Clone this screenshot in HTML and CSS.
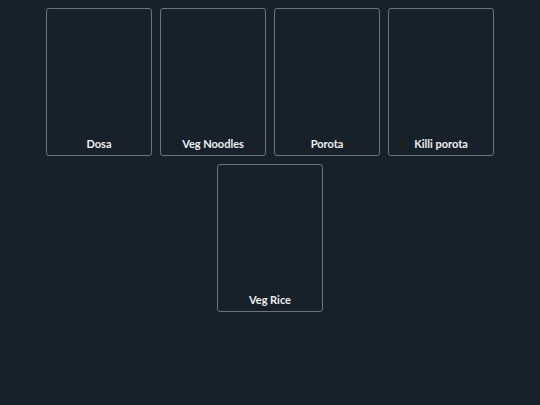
FILE: index.html
```html
<!DOCTYPE html>
<html>
<head>
<meta charset="utf-8">
<link rel="stylesheet" href="styles.css">
</head>
<body>
<div class="grid">
  <div class="card"><span class="name">Dosa</span></div>
  <div class="card"><span class="name">Veg Noodles</span></div>
  <div class="card"><span class="name">Porota</span></div>
  <div class="card"><span class="name">Killi porota</span></div>
  <div class="card"><span class="name">Veg Rice</span></div>
</div>
</body>
</html>
```

FILE: styles.css
```css
html, body {
  margin: 0;
  padding: 0;
  background: #18202a;
  height: 100%;
}
body {
  font-family: Lato, "Noto Sans", sans-serif;
}
.grid {
  display: flex;
  flex-wrap: wrap;
  justify-content: center;
  gap: 8px;
  width: 448px;
  margin: 0 auto;
  padding-top: 8px;
}
.card {
  box-sizing: border-box;
  width: 106px;
  height: 148px;
  border: 1px solid #6c747e;
  border-radius: 3px;
  display: flex;
  align-items: flex-end;
  justify-content: center;
  padding-bottom: 4px;
}
.name {
  color: #eef0f2;
  font-size: 11px;
  font-weight: 700;
  line-height: 14px;
}
```
